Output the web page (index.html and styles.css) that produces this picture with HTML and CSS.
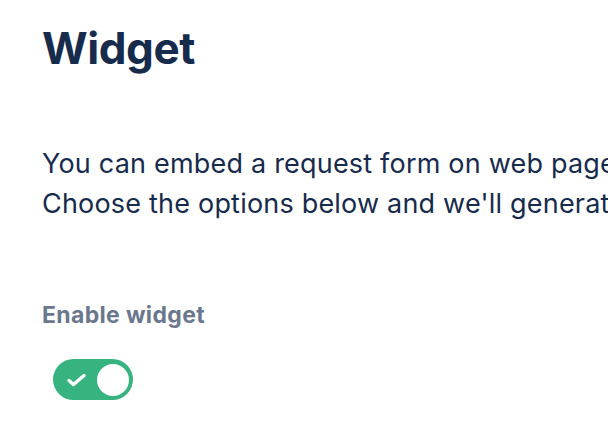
FILE: index.html
```html
<!DOCTYPE html>
<html>
<head>
<meta charset="utf-8">
<link rel="stylesheet" href="styles.css">
</head>
<body>
<main class="page">
  <h1 class="title">Widget</h1>
  <p class="intro">You can embed a request form on web pages and apps.<br>Choose the options below and we'll generate the code for you.</p>
  <div class="field">
    <label class="label">Enable widget</label>
    <div class="toggle">
      <svg class="check" width="22" height="16" viewBox="0 0 22 16"><path d="M4 8.5 L8.5 12.5 L19 3.5" fill="none" stroke="#fff" stroke-width="3.4" stroke-linecap="round" stroke-linejoin="round"/></svg>
      <span class="knob"></span>
    </div>
  </div>
</main>
</body>
</html>
```
FILE: styles.css
```css
html, body {
  margin: 0;
  padding: 0;
  background: #fff;
}
body {
  font-family: "Inter", "Liberation Sans", sans-serif;
  color: #172B4D;
  overflow: hidden;
}
.page {
  padding: 22px 0 0 42px;
  width: 1200px;
}
.title {
  margin: 0;
  font-size: 44px;
  font-weight: 700;
  line-height: 52px;
  letter-spacing: -0.4px;
}
.intro {
  margin: 70px 0 0 0;
  font-size: 27px;
  line-height: 40px;
  letter-spacing: 0.2px;
  white-space: nowrap;
}
.field {
  margin-top: 77px;
}
.label {
  display: block;
  font-size: 23px;
  font-weight: 700;
  letter-spacing: 0.35px;
  color: #6B778C;
  line-height: 28px;
}
.toggle {
  margin: 30px 0 0 11px;
  width: 80px;
  height: 41px;
  border-radius: 21px;
  background: #36B37E;
  box-sizing: border-box;
  padding: 4px;
  display: flex;
  align-items: center;
  justify-content: space-between;
}
.check {
  margin-left: 8px;
}
.knob {
  width: 32px;
  height: 32px;
  border-radius: 50%;
  background: #fff;
}
```
